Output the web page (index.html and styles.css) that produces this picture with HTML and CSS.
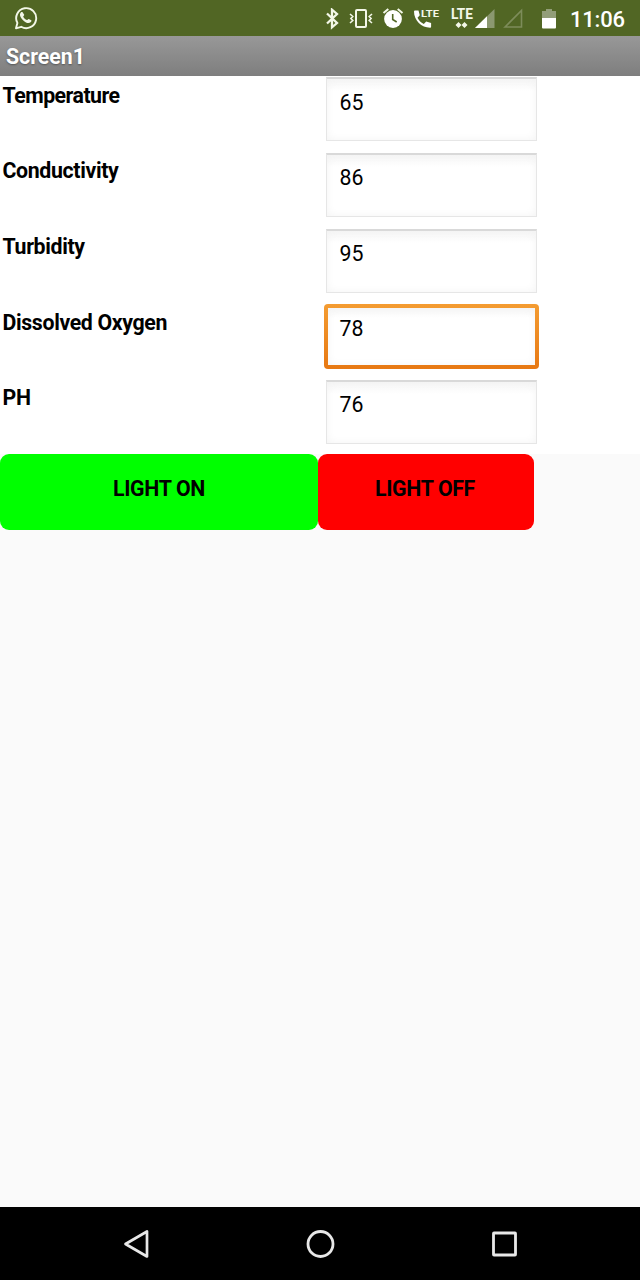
FILE: index.html
```html
<!DOCTYPE html>
<html lang="en">
<head>
<meta charset="utf-8">
<title>Screen1</title>
<link rel="stylesheet" href="styles.css">
</head>
<body>
<div class="phone">
  <header class="status">
    <svg class="whatsapp" width="24" height="24" viewBox="0 0 24 24"><path d="M2 22.300l1.400-5.400A10 10 0 1 1 7.200 20.800Z" fill="none" stroke="#f3f7e8" stroke-width="1.900" stroke-linejoin="round"/><path d="M8.600 6.300c-.5-.6-1.100-.5-1.600 0-2.200 2.300-.5 5.200 1.800 7.600 2.500 2.400 5.500 4.200 7.800 2.400.8-.6 1-1.700.7-2l-2.500-1.400c-.9-.2-1.200 1.300-1.900 1.200-1.600-.5-3-1.900-3.700-3.400 0-.8 1.200-1.100 1-1.900Z" fill="#f3f7e8"/></svg>
    <div class="tray">
      <svg class="bt" width="15" height="22" viewBox="0 0 15 22"><path d="M2 5.500l10 9.500-5 4.300V1.700l5 4.300L2 15.500" fill="none" stroke="#f3f7e8" stroke-width="2.300"/></svg>
      <svg class="vibrate" width="24" height="22" viewBox="0 0 24 22" fill="none" stroke="#f3f7e8"><rect x="7" y="2" width="10" height="17" rx="1" stroke-width="2"/><path d="M1 6l2.800 2.500-1.900 2 1.900 2L1 15M23 6l-2.800 2.500 1.900 2-1.900 2L23 15" stroke-width="1.600"/></svg>
      <svg class="alarm" width="22" height="22" viewBox="0 0 22 22"><circle cx="11" cy="11" r="8.900" fill="#fff"/><path d="M1.500 5L6.300 1M20.500 5L15.700 1" stroke="#f3f7e8" stroke-width="2"/><path d="M10.700 6v5.500l4 2.500" fill="none" stroke="#516624" stroke-width="1.600"/></svg>
      <svg class="call" width="27" height="22" viewBox="0 0 27 22"><path d="M2 2.500h3.500l1.300 4.800-2.300 2.400c1.600 3 3.300 4.700 6.300 6.200l2.400-2.300 4.900 1.300v3.800q0 1-1 1C8.500 19.700 1 12.300 1 3.500q0-1 1-1Z" fill="#fff"/><text x="8" y="8.900" class="lte-small" textLength="18" lengthAdjust="spacingAndGlyphs">LTE</text></svg>
      <svg class="lte" width="25" height="26" viewBox="-1 -4 25 26"><text x="0" y="11" class="lte-large" textLength="22" lengthAdjust="spacingAndGlyphs">LTE</text><path d="M4.500 17l3-3 3 3-3 3ZM10.500 17l3-3 3 3-3 3Z" fill="#f3f7e8"/></svg>
      <svg class="signal" width="20" height="22" viewBox="0 0 20 22"><path d="M0 20L19.500 1v19Z" fill="#8b9870"/><path d="M0 20L12 8.300V20Z" fill="#fff"/></svg>
      <svg class="no-signal" width="20" height="22" viewBox="0 0 20 22"><path d="M2 19L18.500 2.500V19Z" fill="none" stroke="#7d8c5a" stroke-width="1.600"/></svg>
      <svg class="battery" width="14" height="22" viewBox="0 0 14 22"><path d="M0 3h4V1h6v2h4v7H0Z" fill="#929e78"/><path d="M0 10h14v9.500q0 1-1 1H1q-1 0-1-1Z" fill="#fff"/></svg>
      <span class="clock">11:06</span>
    </div>
  </header>
  <div class="titlebar">Screen1</div>
  <main class="form">
    <div class="row"><label class="label temperature">Temperature</label><div class="field">65</div></div>
    <div class="row"><label class="label">Conductivity</label><div class="field">86</div></div>
    <div class="row"><label class="label">Turbidity</label><div class="field">95</div></div>
    <div class="row"><label class="label">Dissolved Oxygen</label><div class="field focused">78</div></div>
    <div class="row"><label class="label">PH</label><div class="field">76</div></div>
  </main>
  <div class="actions">
    <button class="btn on">LIGHT ON</button>
    <button class="btn off">LIGHT OFF</button>
  </div>
  <nav class="nav">
    <svg width="28" height="32" viewBox="0 0 28 32"><path d="M2.500 16L24 3.500v25Z" fill="none" stroke="#e8e8e8" stroke-width="2.700" stroke-linejoin="round"/></svg>
    <svg width="32" height="32" viewBox="0 0 32 32"><circle cx="15.500" cy="16" r="12.500" fill="none" stroke="#e8e8e8" stroke-width="2.800"/></svg>
    <svg width="28" height="32" viewBox="0 0 28 32"><rect x="3.500" y="5" width="22" height="22" rx=".5" fill="none" stroke="#e8e8e8" stroke-width="2.800"/></svg>
  </nav>
</div>
</body>
</html>
```
FILE: styles.css
```css
* { box-sizing: border-box; }
body { margin: 0; font-family: Roboto, sans-serif; color: #000; }
.phone { width: 640px; height: 1280px; display: flex; flex-direction: column; background: #fafafa; overflow: hidden; }
.status { height: 36.4px; flex: none; background: #516624; display: flex; justify-content: space-between; padding: 6px 16px 0 14px; }
.status svg { display: block; flex: none; }
.tray { display: flex; align-items: flex-start; margin-top: 2px; }
.vibrate { margin-left: 9px; }
.alarm { margin-left: 9px; }
.call { margin-left: 9px; }
.lte { margin: -4px 0 0 10px; }
.signal { margin-left: 0; }
.no-signal { margin-left: 8px; }
.battery { margin-left: 19px; }
.clock { width: 54px; margin-left: 14px; font-size: 22px; font-weight: 500; line-height: 23px; color: #fff; white-space: nowrap; letter-spacing: -.2px; }
.lte-small { font-size: 9.5px; font-weight: 700; fill: #f3f7e8; }
.lte-large { font-size: 15px; font-weight: 700; fill: #f3f7e8; }
.titlebar { height: 40px; flex: none; padding-left: 6px; background: linear-gradient(#989898, #7e7e7e); color: #fff; font-size: 21.3px; font-weight: 700; line-height: 41px; text-shadow: 0 1px 2px #555; }
.form { flex: none; background: #fff; height: 378px; }
.row { height: 75.6px; display: flex; align-items: flex-start; }
.label { width: 326px; padding: 6.4px 0 0 2.5px; font-size: 21.3px; line-height: 25px; font-weight: 700; letter-spacing: -.35px; }
.label.temperature { letter-spacing: -.52px; }
.field { width: 211px; height: 64px; margin-top: 1px; padding: 10.3px 0 0 12.5px; border: 1.5px solid #e6e6e6; border-top: 2px solid #d9d9d9; background: linear-gradient(#f5f5f5, #fff 12px); box-shadow: inset 0 0 8px #f3f3f3; font-size: 21.3px; line-height: 25px; }
.field.focused { width: 215.500px; height: 65px; margin: 1px 0 0 -2.5px; padding: 8px 0 0 12px; border: 4px solid transparent; border-radius: 4px; background: linear-gradient(#f6f6f6, #fff 10px) padding-box, linear-gradient(#f49c32, #e77812) border-box; }
.actions { height: 75.5px; display: flex; flex: none; }
.btn { border: 0; border-radius: 9px; padding: 0 0 7.500px; font: 700 21.3px/25px Roboto, sans-serif; letter-spacing: -.35px; color: #000; }
.on { width: 318px; background: #0f0; }
.off { width: 216px; padding-right: 2px; background: #f00; }
.nav { margin-top: auto; height: 73px; flex: none; background: #000; display: flex; justify-content: space-between; align-items: center; padding: 0 122px 0 123px; }
```
